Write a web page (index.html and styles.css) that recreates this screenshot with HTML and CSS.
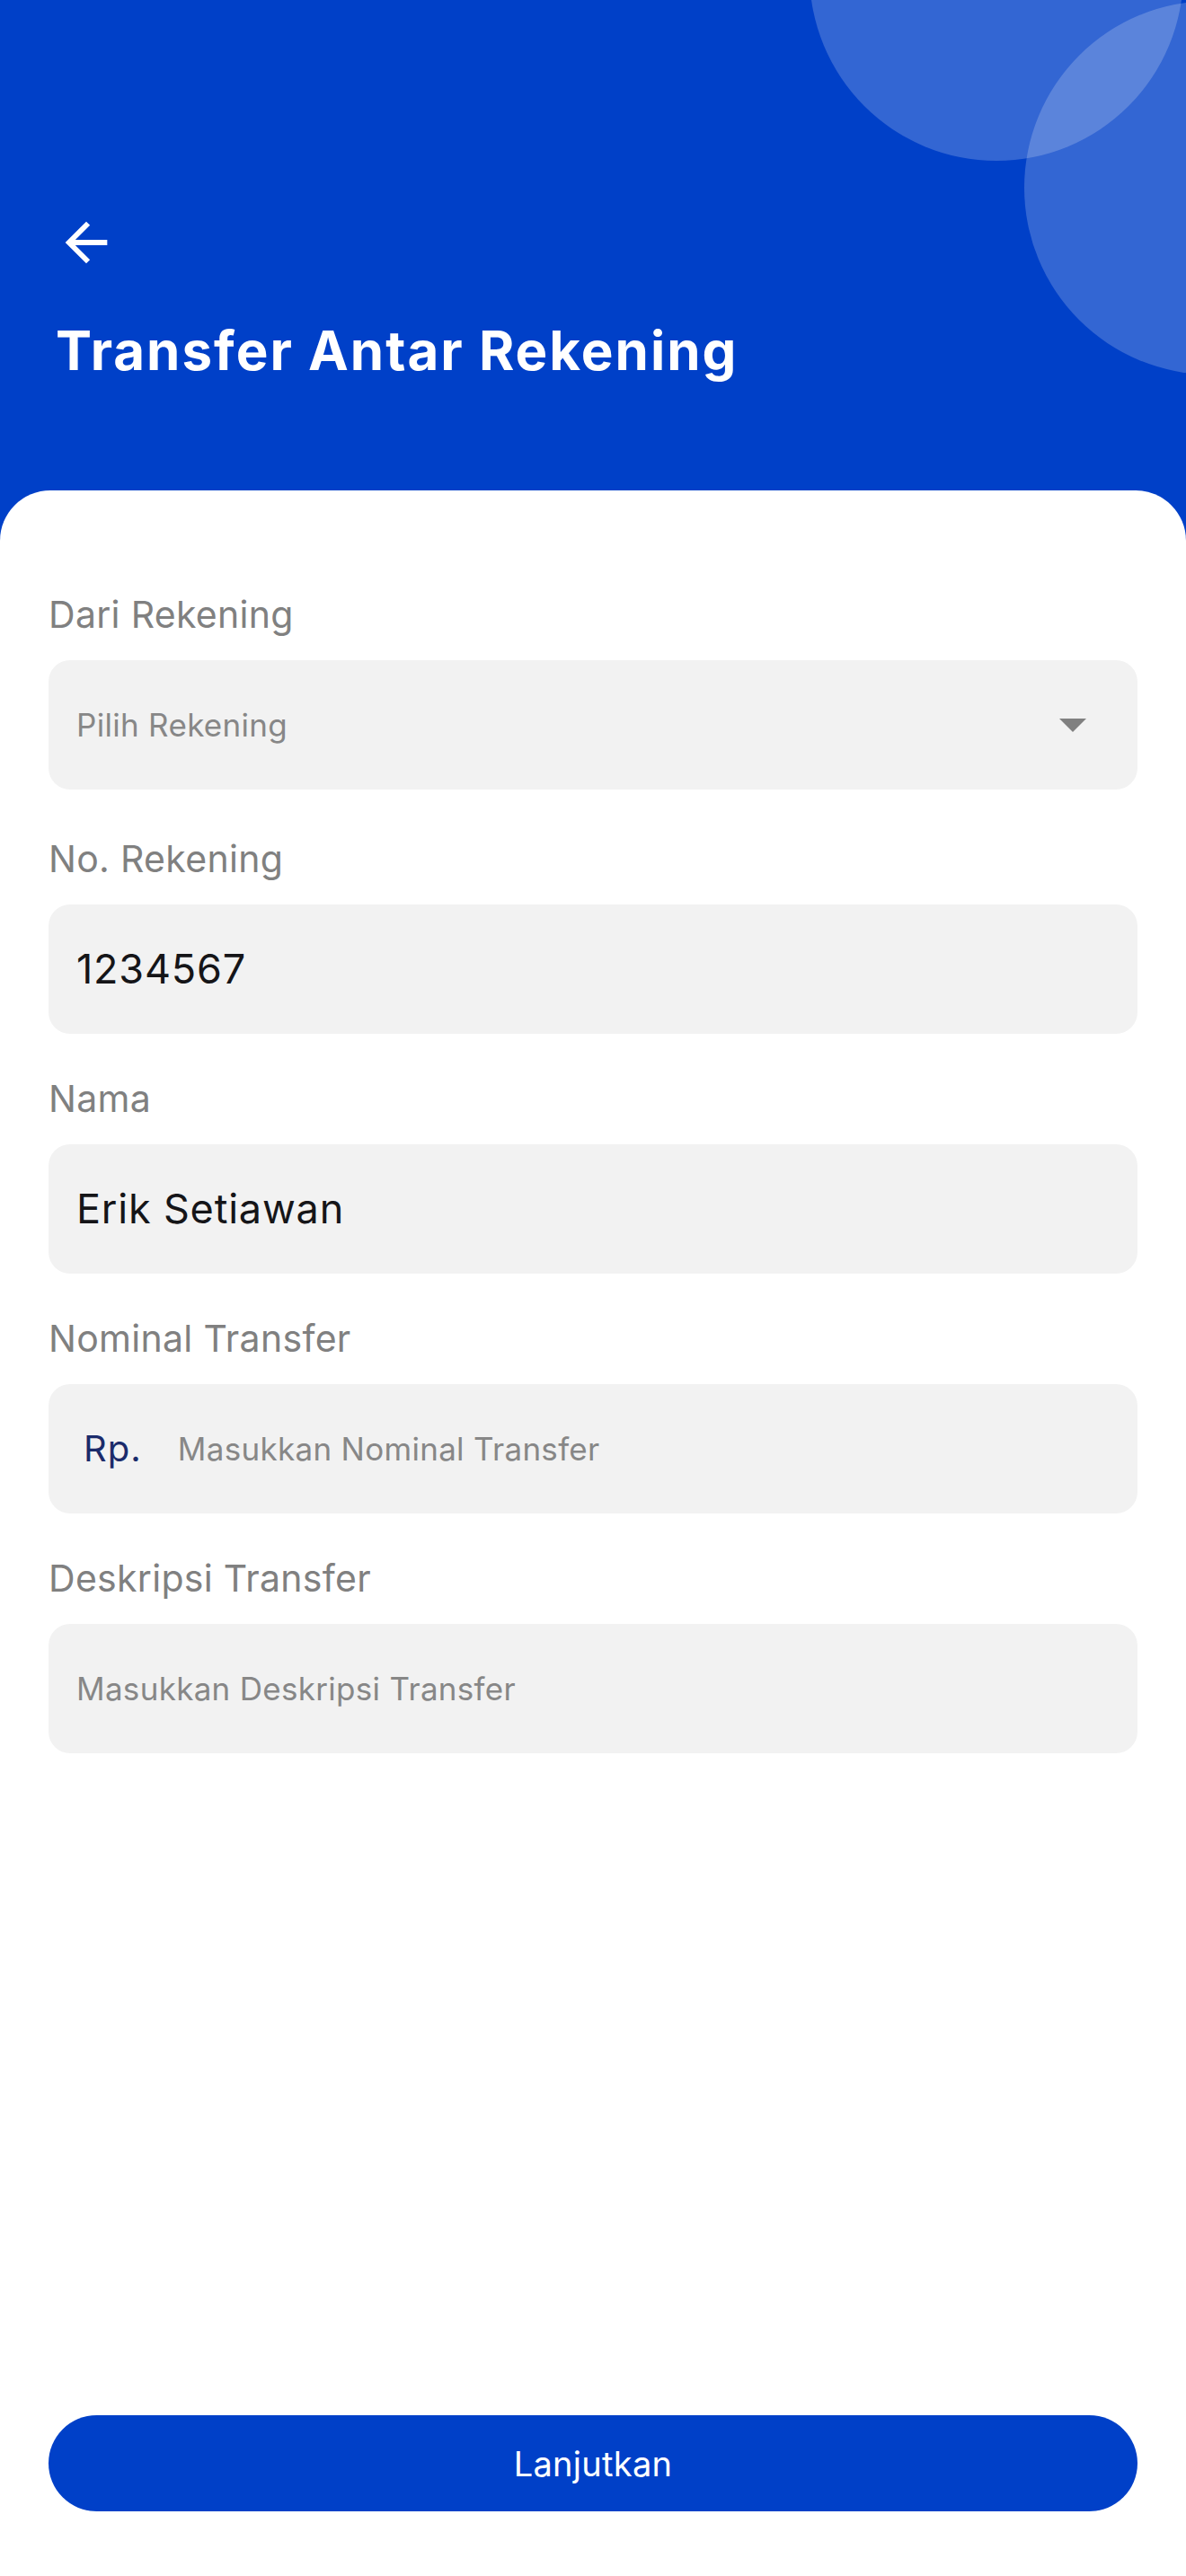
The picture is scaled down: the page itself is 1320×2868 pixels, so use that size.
FILE: index.html
```html
<!DOCTYPE html>
<html lang="id">
<head>
<meta charset="utf-8">
<title>Transfer Antar Rekening</title>
<link rel="stylesheet" href="styles.css">
</head>
<body>
<div class="page">
  <header class="header">
    <span class="circle circle-a"></span>
    <span class="circle circle-b"></span>
    <button class="back" aria-label="Kembali">
      <svg viewBox="0 0 24 24" width="70" height="70"><path d="M20 11H7.83l5.59-5.59L12 4l-8 8 8 8 1.41-1.41L7.83 13H20v-2z" fill="#fff"/></svg>
    </button>
    <h1 class="title">Transfer Antar Rekening</h1>
  </header>
  <main class="card">
    <form class="form">
      <div class="field field-first">
        <label class="label">Dari Rekening</label>
        <div class="box">
          <span class="placeholder">Pilih Rekening</span>
          <svg class="caret" viewBox="0 0 30 15" width="30" height="15"><polygon points="0,0 30,0 15,15" fill="#808080"/></svg>
        </div>
      </div>
      <div class="field">
        <label class="label">No. Rekening</label>
        <div class="box"><span class="value">1234567</span></div>
      </div>
      <div class="field">
        <label class="label">Nama</label>
        <div class="box"><span class="value">Erik Setiawan</span></div>
      </div>
      <div class="field">
        <label class="label">Nominal Transfer</label>
        <div class="box"><span class="prefix">Rp.</span><span class="placeholder">Masukkan Nominal Transfer</span></div>
      </div>
      <div class="field">
        <label class="label">Deskripsi Transfer</label>
        <div class="box"><span class="placeholder">Masukkan Deskripsi Transfer</span></div>
      </div>
    </form>
    <button class="submit" type="button">Lanjutkan</button>
  </main>
</div>
</body>
</html>
```
FILE: styles.css
```css
* { box-sizing: border-box; }
html, body { margin: 0; padding: 0; }
body {
  font-family: Inter, "Noto Sans", "Liberation Sans", sans-serif;
  background: #ffffff;
}
.page {
  position: relative;
  width: 1320px;
  min-height: 2868px;
  background: #0040c8;
  overflow: hidden;
  display: flex;
  flex-direction: column;
}
.header {
  position: relative;
  height: 546px;
  padding: 235px 0 0 61px;
  color: #fff;
}
.circle {
  position: absolute;
  width: 416px;
  height: 416px;
  border-radius: 50%;
  background: rgba(255, 255, 255, 0.2);
}
.circle-a { left: 901px; top: -237px; }
.circle-b { left: 1140px; top: 1px; }
.back {
  display: block;
  width: 70px;
  height: 70px;
  padding: 0;
  margin: 0;
  border: 0;
  background: none;
}
.back svg { display: block; }
.title {
  margin: 50px 0 0 1px;
  font-size: 60px;
  line-height: 70px;
  font-weight: 700;
  letter-spacing: 2px;
}
.card {
  flex: 1;
  background: #fff;
  border-radius: 56px 56px 0 0;
  padding: 114px 54px 72px 54px;
  display: flex;
  flex-direction: column;
}
.form {
  display: flex;
  flex-direction: column;
  gap: 48px;
}
.field { display: flex; flex-direction: column; }
.field-first { margin-bottom: 5px; }
.label {
  font-size: 41px;
  line-height: 48px;
  color: #808080;
  letter-spacing: 0.3px;
  margin-bottom: 27px;
}
.box {
  height: 144px;
  background: #f2f2f2;
  border-radius: 24px;
  padding: 0 57px 0 31px;
  display: flex;
  align-items: center;
}
.placeholder {
  font-size: 35px;
  line-height: 1.2;
  color: #878787;
  letter-spacing: 0.3px;
  flex: 1;
}
.value {
  font-size: 45px;
  line-height: 1.2;
  color: #151518;
  letter-spacing: 0.8px;
}
.prefix {
  font-size: 40px;
  line-height: 1.2;
  color: #1b2b6b;
  letter-spacing: 1px;
  margin: 0 40px 0 8px;
}
.caret { display: block; flex: none; }
.submit {
  margin-top: auto;
  height: 107px;
  width: 100%;
  border: 0;
  border-radius: 54px;
  background: #0040c8;
  color: #fff;
  font-family: Inter, "Noto Sans", "Liberation Sans", sans-serif;
  font-size: 38px;
  letter-spacing: 0.3px;
  font-weight: 400;
}
```
